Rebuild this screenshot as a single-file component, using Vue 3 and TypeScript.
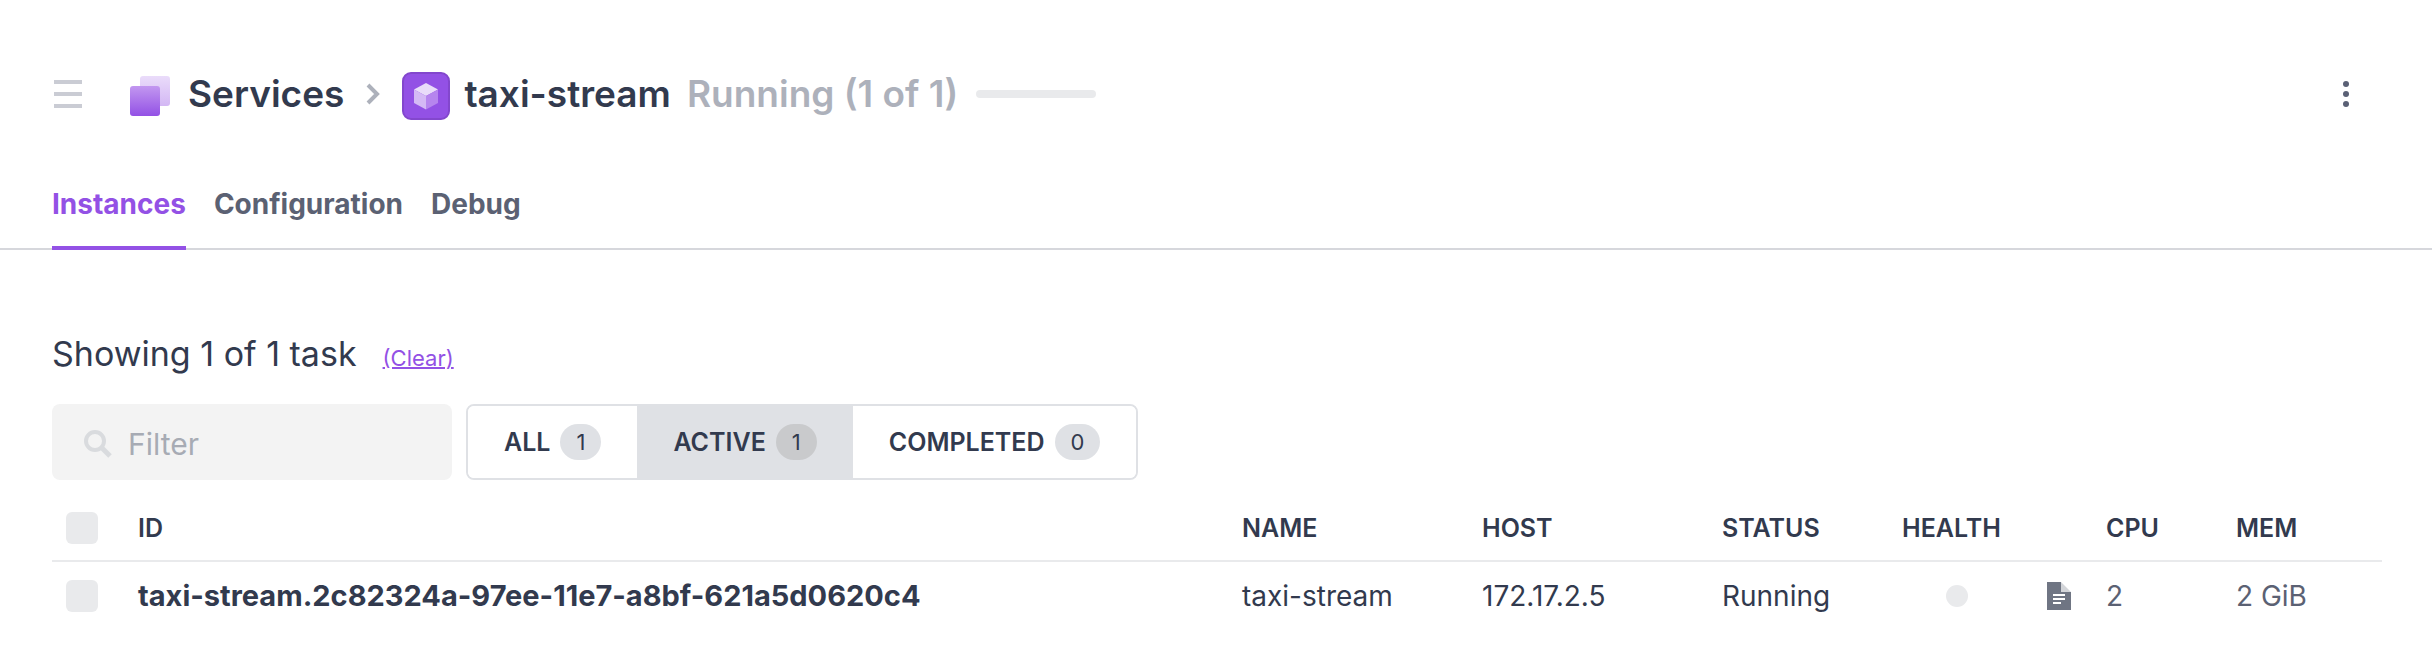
<script setup lang="ts">
import { ref } from 'vue'

interface Task {
  id: string
  name: string
  host: string
  status: string
  cpu: string
  mem: string
}

const tabs: string[] = ['Instances', 'Configuration', 'Debug']
const activeTab = ref('Instances')

const filters: { label: string; count: number }[] = [
  { label: 'ALL', count: 1 },
  { label: 'ACTIVE', count: 1 },
  { label: 'COMPLETED', count: 0 },
]
const activeFilter = ref('ACTIVE')
const query = ref('')

const tasks: Task[] = [
  {
    id: 'taxi-stream.2c82324a-97ee-11e7-a8bf-621a5d0620c4',
    name: 'taxi-stream',
    host: '172.17.2.5',
    status: 'Running',
    cpu: '2',
    mem: '2 GiB',
  },
]
</script>

<template>
  <div class="page">
    <header class="header">
      <button class="icon-button menu" type="button" aria-label="Menu">
        <svg width="28" height="28" viewBox="0 0 28 28" fill="#caccd4">
          <rect width="28" height="4" />
          <rect y="12" width="28" height="4" />
          <rect y="24" width="28" height="4" />
        </svg>
      </button>
      <nav class="breadcrumb" aria-label="Breadcrumb">
        <a class="crumb services" href="#">
          <svg width="40" height="40" viewBox="0 0 40 40">
            <defs>
              <linearGradient id="back" x1="0" y1="0" x2="0" y2="1">
                <stop offset="0" stop-color="#eadcfa" />
                <stop offset="1" stop-color="#d3b7f4" />
              </linearGradient>
              <linearGradient id="front" x1="0" y1="0" x2="0" y2="1">
                <stop offset="0" stop-color="#c297f0" />
                <stop offset="1" stop-color="#9351e5" />
              </linearGradient>
            </defs>
            <rect x="10" width="30" height="30" rx="3" fill="url(#back)" />
            <rect y="10" width="30" height="30" rx="3" fill="url(#front)" />
          </svg>
          <span>Services</span>
        </a>
        <svg class="chevron" width="14" height="22" viewBox="0 0 14 22" fill="none" stroke="#adb1bb" stroke-width="4">
          <path d="M2 2 L11 11 L2 20" />
        </svg>
        <a class="crumb service" href="#">
          <svg width="48" height="48" viewBox="0 0 48 48">
            <rect x="1" y="1" width="46" height="46" rx="8" fill="#9351e5" stroke="#8347cd" stroke-width="2" />
            <path d="M24 11 L36 17.5 L24 24 L12 17.5 Z" fill="#e9dcf9" />
            <path d="M12 17.5 L24 24 V37.5 L12 31 Z" fill="#d4b9f5" />
            <path d="M36 17.5 L24 24 V37.5 L36 31 Z" fill="#b685ee" />
          </svg>
          <span>taxi-stream</span>
        </a>
        <span class="state">Running (1 of 1)</span>
        <span class="progress" role="presentation"></span>
      </nav>
      <button class="icon-button more" type="button" aria-label="More actions">
        <svg width="6" height="26" viewBox="0 0 6 26" fill="#5a6075">
          <circle cx="3" cy="3" r="3" />
          <circle cx="3" cy="13" r="3" />
          <circle cx="3" cy="23" r="3" />
        </svg>
      </button>
    </header>

    <nav class="tabs" aria-label="Service sections">
      <button
        v-for="tab in tabs"
        :key="tab"
        type="button"
        :class="['tab', { active: tab === activeTab }]"
        @click="activeTab = tab"
      >
        {{ tab }}
      </button>
    </nav>

    <main class="content">
      <div class="summary">
        <span>Showing 1 of 1 task</span>
        <a class="clear" href="#">(Clear)</a>
      </div>

      <div class="toolbar">
        <label class="search">
          <svg width="28" height="28" viewBox="0 0 28 28" fill="none" stroke="#d9dbde">
            <circle cx="11" cy="11" r="9" stroke-width="4" />
            <path d="M18 18 L26 26" stroke-width="5" />
          </svg>
          <input v-model="query" type="text" placeholder="Filter" aria-label="Filter" />
        </label>
        <div class="filters" role="group" aria-label="Task state">
          <button
            v-for="filter in filters"
            :key="filter.label"
            type="button"
            :class="['filter', { active: filter.label === activeFilter }]"
            @click="activeFilter = filter.label"
          >
            <span>{{ filter.label }}</span>
            <span class="badge">{{ filter.count }}</span>
          </button>
        </div>
      </div>

      <table class="tasks">
        <colgroup>
          <col class="col-check" />
          <col />
          <col class="col-wide" />
          <col class="col-wide" />
          <col class="col-status" />
          <col class="col-health" />
          <col class="col-log" />
          <col class="col-cpu" />
          <col class="col-mem" />
        </colgroup>
        <thead>
          <tr>
            <th class="check"><input type="checkbox" aria-label="Select all tasks" /></th>
            <th>ID</th>
            <th>NAME</th>
            <th>HOST</th>
            <th>STATUS</th>
            <th>HEALTH</th>
            <td></td>
            <th>CPU</th>
            <th>MEM</th>
          </tr>
        </thead>
        <tbody>
          <tr v-for="task in tasks" :key="task.id">
            <td class="check"><input type="checkbox" :aria-label="'Select ' + task.id" /></td>
            <td><a class="task-id" href="#">{{ task.id }}</a></td>
            <td><a href="#">{{ task.name }}</a></td>
            <td><a href="#">{{ task.host }}</a></td>
            <td>{{ task.status }}</td>
            <td><span class="dot"></span></td>
            <td>
              <a class="log" href="#" aria-label="Logs">
                <svg width="24" height="28" viewBox="0 0 24 28">
                  <path d="M0 0 H14 V10 H24 V28 H0 Z" fill="#6f7583" />
                  <path d="M14 0 L24 10 H14 Z" fill="#d3d5d9" />
                  <path d="M6 13 H18 M6 17 H18 M6 21 H14" stroke="#ffffff" stroke-width="2" />
                </svg>
              </a>
            </td>
            <td class="amount">{{ task.cpu }}</td>
            <td class="amount">{{ task.mem }}</td>
          </tr>
        </tbody>
      </table>
    </main>
  </div>
</template>

<style>
body {
  margin: 0;
  background: #ffffff;
}
</style>

<style scoped>
.page {
  font-family: Inter, Roboto, 'Liberation Sans', sans-serif;
  font-size: 28px;
  line-height: 36px;
  color: #323a4e;
}

a {
  color: inherit;
  text-decoration: none;
}

button {
  margin: 0;
  font-family: inherit;
  cursor: pointer;
}

svg {
  display: block;
  flex: none;
}

.header {
  display: flex;
  align-items: center;
  padding: 68px 83px 0 54px;
}

.icon-button {
  padding: 0;
  border: 0;
  background: none;
}

.more {
  margin-left: auto;
}

.breadcrumb {
  display: flex;
  align-items: center;
  margin-left: 48px;
  font-size: 37px;
  line-height: 52px;
  font-weight: 600;
  white-space: nowrap;
}

.crumb {
  display: flex;
  align-items: center;
}

.crumb svg {
  margin-top: 4px;
}

.services {
  gap: 18px;
}

.chevron {
  margin: 0 22px;
}

.service {
  gap: 14px;
}

.state {
  margin-left: 16px;
  color: #adb1bb;
}

.progress {
  width: 120px;
  height: 8px;
  margin-left: 18px;
  border-radius: 4px;
  background: #e9eaec;
}

.tabs {
  display: flex;
  gap: 28px;
  padding: 60px 52px 0;
  border-bottom: 2px solid #d6d7dc;
}

.tab {
  margin-bottom: -2px;
  padding: 6px 0 24px;
  border: 0;
  border-bottom: 4px solid transparent;
  background: none;
  color: #5b6173;
  font-size: 28px;
  line-height: 36px;
  font-weight: 700;
}

.tab.active {
  border-color: #9351e5;
  color: #9351e5;
}

.content {
  padding: 80px 50px 0 52px;
}

.summary {
  display: flex;
  align-items: baseline;
  gap: 26px;
  font-size: 34px;
  line-height: 48px;
}

.clear {
  color: #9351e5;
  font-size: 22px;
  text-decoration: underline;
  text-decoration-thickness: 2px;
}

.toolbar {
  display: flex;
  gap: 14px;
  margin-top: 22px;
}

.search {
  display: flex;
  align-items: center;
  gap: 16px;
  box-sizing: border-box;
  width: 400px;
  height: 76px;
  padding: 4px 32px 0;
  border-radius: 8px;
  background: #f3f3f3;
}

.search input {
  flex: 1;
  min-width: 0;
  padding: 0;
  border: 0;
  outline: 0;
  background: none;
  color: inherit;
  font-family: inherit;
  font-size: 30px;
  line-height: 40px;
}

.search input::placeholder {
  color: #a7abb4;
  opacity: 1;
}

.filters {
  display: flex;
  overflow: hidden;
  border: 2px solid #dfe1e5;
  border-radius: 8px;
}

.filter {
  display: flex;
  align-items: center;
  gap: 10px;
  padding: 0 36px;
  border: 0;
  background: #ffffff;
  color: inherit;
  font-size: 25px;
  font-weight: 600;
}

.filter.active {
  background: #dfe1e5;
}

.badge {
  padding: 0 16px;
  border-radius: 18px;
  background: #dfe1e5;
  font-size: 22px;
  line-height: 36px;
  font-weight: 400;
}

.active .badge {
  background: #c9cacc;
}

.tasks {
  width: 100%;
  table-layout: fixed;
  border-collapse: collapse;
}

.col-check {
  width: 86px;
}

.col-wide {
  width: 240px;
}

.col-status {
  width: 180px;
}

.col-health {
  width: 145px;
}

.col-log {
  width: 59px;
}

.col-cpu {
  width: 130px;
}

.col-mem {
  width: 146px;
}

th,
td {
  box-sizing: border-box;
  height: 68px;
  padding: 0;
  text-align: left;
  white-space: nowrap;
}

thead tr {
  border-bottom: 2px solid #e9eaec;
}

thead th,
thead td {
  height: 81px;
  padding-top: 16px;
}

th {
  font-size: 25px;
  font-weight: 600;
}

.check input {
  display: block;
  width: 32px;
  height: 32px;
  margin: 0 0 0 14px;
  appearance: none;
  border-radius: 6px;
  background: #e9eaec;
}

.check input:checked {
  background: #9351e5;
}

.task-id {
  font-size: 29px;
  font-weight: 700;
}

.amount {
  color: #5b6173;
}

.dot {
  display: block;
  width: 22px;
  height: 22px;
  margin-left: 44px;
  border-radius: 50%;
  background: #e9eaec;
}

.log {
  display: block;
  width: 24px;
}
</style>
